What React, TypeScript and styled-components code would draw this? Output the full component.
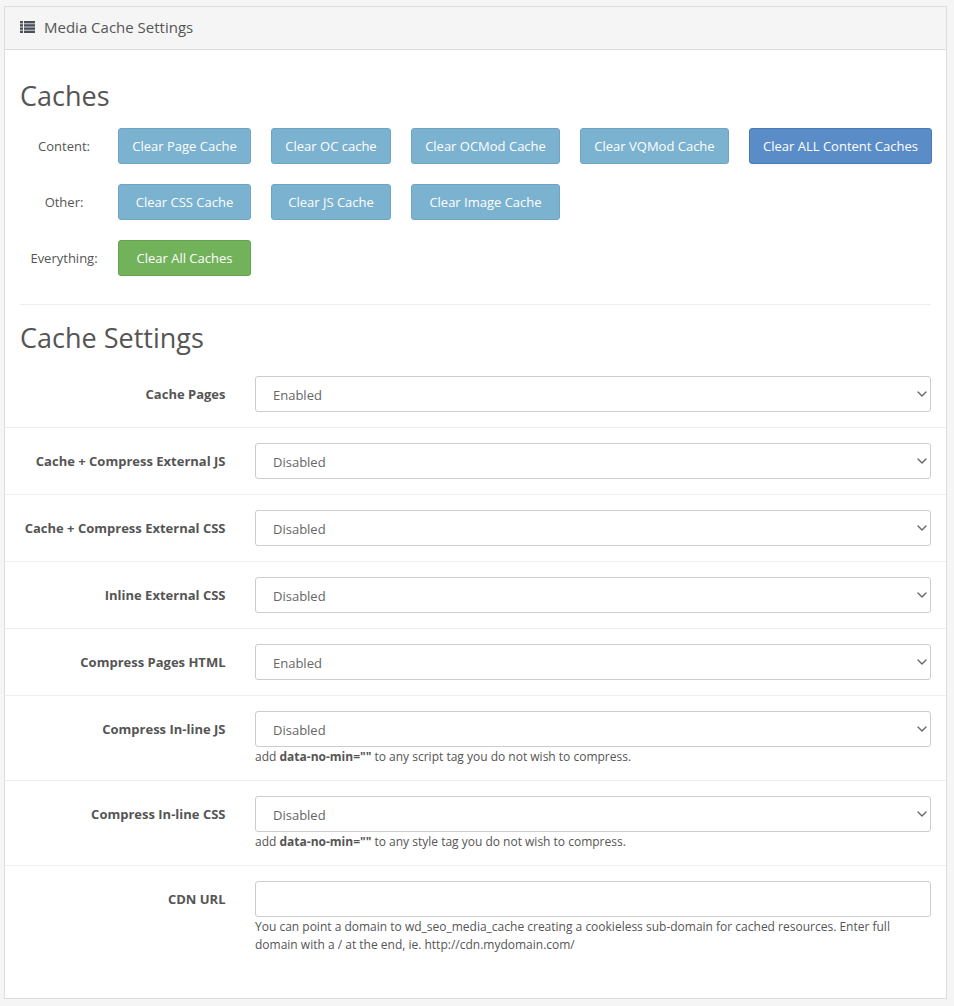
import React from 'react'
import styled, { createGlobalStyle } from 'styled-components'
import { ChevronDown } from 'lucide-react'

const GlobalStyle = createGlobalStyle`
  html, body {
    margin: 0;
    padding: 0;
    background: #f5f5f5;
    color: #555;
    font-family: "Open Sans", "Liberation Sans", sans-serif;
    font-size: 13px;
  }
  * {
    box-sizing: border-box;
  }
`

const Panel = styled.div`
  width: 943px;
  height: 993px;
  margin: 6px 0 0 4px;
  background: #fff;
  border: 1px solid #ddd;
`

const PanelHeading = styled.div`
  display: flex;
  align-items: center;
  gap: 9px;
  height: 43px;
  padding: 0 15px 2px;
  background: #f5f5f5;
  border-bottom: 1px solid #ddd;
  font-size: 15px;
  color: #555;
`

const Section = styled.div`
  padding: 0 15px 4px;
`

const Title = styled.h2<{ $top: number }>`
  margin: ${({ $top }) => $top}px 0 0;
  font-size: 27px;
  font-weight: 400;
  line-height: 38px;
  color: #555;
`

const ButtonGrid = styled.div`
  display: grid;
  grid-template-columns: 68px 133px 120px 149px 149px 183px;
  gap: 20px;
  align-items: center;
  margin: 13px 0 0 10px;
`

const GroupLabel = styled.span`
  justify-self: center;
  white-space: nowrap;
  grid-column: 1;
`

const colours = {
  info: ['#7bb2d0', '#6fa5c4'],
  primary: ['#5a8dc8', '#4a7bb2'],
  success: ['#72b25a', '#65a34f'],
}

const Button = styled.button<{ $kind: keyof typeof colours }>`
  height: 36px;
  padding: 0;
  border: 1px solid ${({ $kind }) => colours[$kind][1]};
  border-radius: 3px;
  background: ${({ $kind }) => colours[$kind][0]};
  color: #fff;
  font: inherit;
  white-space: nowrap;
`

const Divider = styled.hr`
  margin: 28px 0 0;
  border: 0;
  border-top: 1px solid #eee;
`

const FormRow = styled.div`
  display: grid;
  grid-template-columns: 220.5px 676px;
  column-gap: 29.5px;
  padding: 15px 15px 15px 0;
  border-bottom: 1px solid #eee;

  &:last-child {
    border-bottom: 0;
  }
`

const FieldLabel = styled.label`
  padding-top: 9px;
  text-align: right;
  font-weight: 700;
  line-height: 18px;
`

const SelectWrap = styled.div`
  position: relative;

  svg {
    position: absolute;
    top: 10px;
    right: 1px;
    color: #666;
    pointer-events: none;
  }
`

const Select = styled.select`
  display: block;
  width: 100%;
  height: 36px;
  padding: 2px 17px 0;
  border: 1px solid #ccc;
  border-radius: 3px;
  background: #fff;
  color: #666;
  font: inherit;
  appearance: none;
`

const Input = styled.input`
  display: block;
  width: 100%;
  height: 36px;
  padding: 0 13px;
  border: 1px solid #ccc;
  border-radius: 3px;
  background: #fff;
`

const Help = styled.div`
  height: 18px;
  margin-top: 1px;
  margin-bottom: -1px;
  font-size: 12px;
  line-height: 18px;
`

const HelpBlock = styled(Help)`
  height: auto;
`

const ListIcon = () => (
  <svg width="15" height="12" viewBox="0 0 15 12" fill="#4a4f5a">
    <rect x="0" y="0" width="3" height="2.4" />
    <rect x="4" y="0" width="11" height="2.4" />
    <rect x="0" y="3.2" width="3" height="2.4" />
    <rect x="4" y="3.2" width="11" height="2.4" />
    <rect x="0" y="6.4" width="3" height="2.4" />
    <rect x="4" y="6.4" width="11" height="2.4" />
    <rect x="0" y="9.6" width="3" height="2.4" />
    <rect x="4" y="9.6" width="11" height="2.4" />
  </svg>
)

const dataNoMin = 'data-no-min=""'

const fields = [
  { label: 'Cache Pages', value: 'Enabled' },
  { label: 'Cache + Compress External JS', value: 'Disabled' },
  { label: 'Cache + Compress External CSS', value: 'Disabled' },
  { label: 'Inline External CSS', value: 'Disabled' },
  { label: 'Compress Pages HTML', value: 'Enabled' },
  { label: 'Compress In-line JS', value: 'Disabled', tag: 'script' },
  { label: 'Compress In-line CSS', value: 'Disabled', tag: 'style' },
]

const App = () => {
  return (
    <>
      <GlobalStyle />
      <Panel>
        <PanelHeading>
          <ListIcon />
          Media Cache Settings
        </PanelHeading>
        <Section>
          <Title $top={27}>Caches</Title>
          <ButtonGrid>
            <GroupLabel>Content:</GroupLabel>
            <Button $kind="info">Clear Page Cache</Button>
            <Button $kind="info">Clear OC cache</Button>
            <Button $kind="info">Clear OCMod Cache</Button>
            <Button $kind="info">Clear VQMod Cache</Button>
            <Button $kind="primary">Clear ALL Content Caches</Button>
            <GroupLabel>Other:</GroupLabel>
            <Button $kind="info">Clear CSS Cache</Button>
            <Button $kind="info">Clear JS Cache</Button>
            <Button $kind="info">Clear Image Cache</Button>
            <GroupLabel>Everything:</GroupLabel>
            <Button $kind="success">Clear All Caches</Button>
          </ButtonGrid>
          <Divider />
          <Title $top={14}>Cache Settings</Title>
        </Section>
        <div>
          {fields.map((field) => (
            <FormRow key={field.label}>
              <FieldLabel>{field.label}</FieldLabel>
              <div>
                <SelectWrap>
                  <Select defaultValue={field.value}>
                    <option>Enabled</option>
                    <option>Disabled</option>
                  </Select>
                  <ChevronDown size={16} strokeWidth={2} />
                </SelectWrap>
                {field.tag && (
                  <Help>
                    add <b>{dataNoMin}</b> to any {field.tag} tag you do not wish to compress.
                  </Help>
                )}
              </div>
            </FormRow>
          ))}
          <FormRow>
            <FieldLabel>CDN URL</FieldLabel>
            <div>
              <Input />
              <HelpBlock>
                You can point a domain to wd_seo_media_cache creating a cookieless sub-domain for
                cached resources. Enter full domain with a / at the end, ie. http://cdn.mydomain.com/
              </HelpBlock>
            </div>
          </FormRow>
        </div>
      </Panel>
    </>
  )
}

export default App
